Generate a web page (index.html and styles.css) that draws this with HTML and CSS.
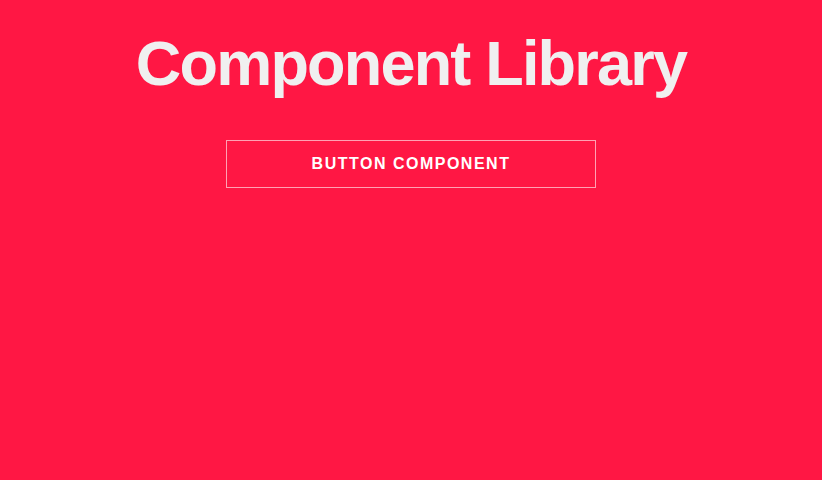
FILE: index.html
```html
<!DOCTYPE html>
<html>
<head>
<meta charset="utf-8">
<link rel="stylesheet" href="styles.css">
</head>
<body>
<main class="page">
  <h1 class="title">Component Library</h1>
  <button class="btn">BUTTON COMPONENT</button>
</main>
</body>
</html>
```
FILE: styles.css
```css
html, body {
  margin: 0;
  padding: 0;
  height: 100%;
}
body {
  background: #ff1744;
  font-family: "Liberation Sans", Arial, sans-serif;
}
.page {
  display: flex;
  flex-direction: column;
  align-items: center;
  padding-top: 25px;
}
.title {
  margin: 0;
  color: #f0f0f0;
  font-size: 63px;
  font-weight: 700;
  line-height: 76px;
  letter-spacing: -1.8px;
}
.btn {
  margin-top: 39px;
  width: 370px;
  height: 48px;
  background: transparent;
  border: 1px solid rgba(255, 255, 255, 0.6);
  color: #ffffff;
  font-family: "Liberation Sans", Arial, sans-serif;
  font-size: 16px;
  font-weight: 700;
  letter-spacing: 1.5px;
  padding: 0;
}
```
